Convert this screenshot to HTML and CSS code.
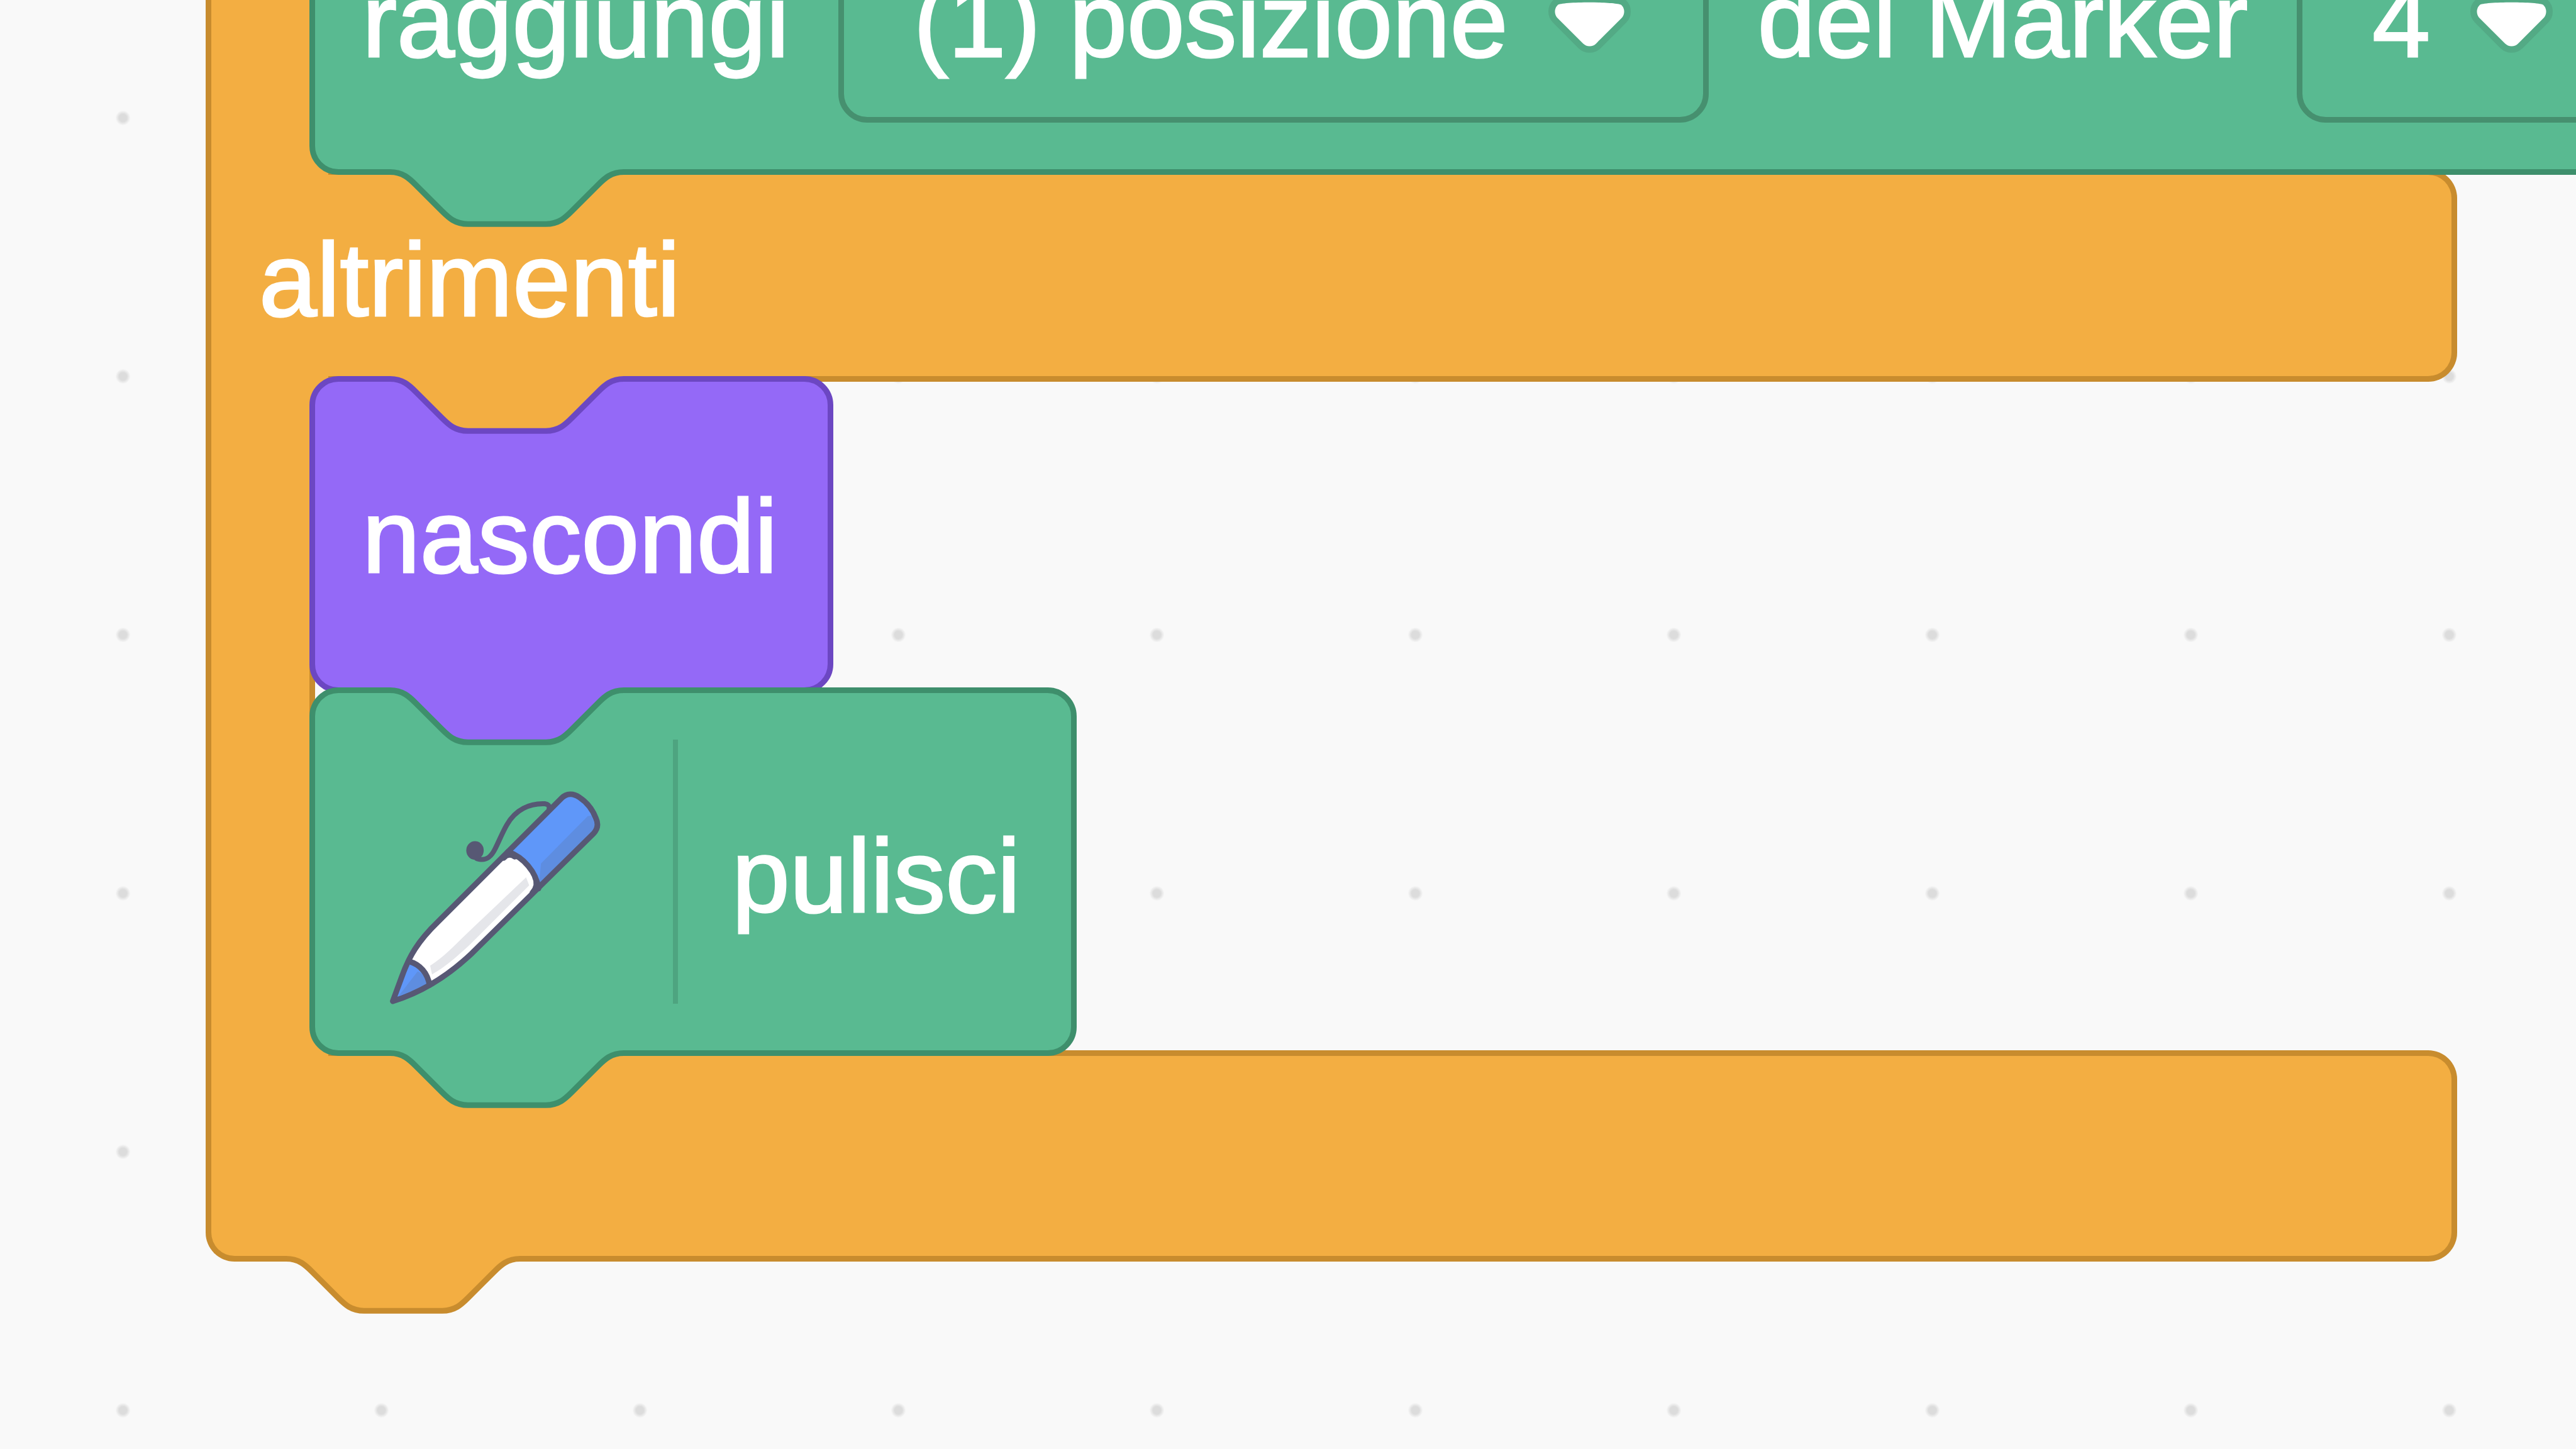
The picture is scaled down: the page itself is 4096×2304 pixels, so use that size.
FILE: index.html
```html
<!DOCTYPE html>
<html lang="it">
<head>
  <meta charset="utf-8">
  <meta name="viewport" content="width=device-width, initial-scale=1">
  <title>Blocchi</title>
  <link rel="stylesheet" href="styles.css">
</head>
<body>
  <svg class="defs" aria-hidden="true">
    <symbol id="connector" viewBox="0 0 36 9">
      <path class="connector-fill" d="M0 .44c2 0 3 1 4 2l4 4c1 1 2 2 4 2h12c2 0 3-1 4-2l4-4c1-1 2-2 4-2V0H0Z"/>
      <path class="connector-line" d="M0 .44c2 0 3 1 4 2l4 4c1 1 2 2 4 2h12c2 0 3-1 4-2l4-4c1-1 2-2 4-2"/>
    </symbol>
    <symbol id="arrow" viewBox="0 0 12.71 8.79">
      <path fill="#231f20" opacity=".1" d="M12.71 2.44A2.41 2.41 0 0 1 12 4.16L8.08 8.08a2.45 2.45 0 0 1-3.45 0L.72 4.16A2.42 2.42 0 0 1 0 2.44 2.48 2.48 0 0 1 .71.71C1 .47 1.43 0 6.36 0S11.75.46 12 .71a2.44 2.44 0 0 1 .71 1.73Z"/>
      <path fill="#fff" d="M6.36 7.79a1.43 1.43 0 0 1-1-.42L1.42 3.45a1.44 1.44 0 0 1 0-2c.56-.56 9.31-.56 9.87 0a1.44 1.44 0 0 1 0 2L7.37 7.37a1.43 1.43 0 0 1-1.01.42Z"/>
    </symbol>
  </svg>

  <main class="workspace">
    <section class="c-block">
      <div class="spine">
        <svg class="connector tab" aria-hidden="true"><use href="#connector"/></svg>
      </div>

      <div class="mouth">
        <div class="block pen">
          <span class="label">raggiungi</span>
          <span class="field">
            <select class="field-input" aria-label="posizione"><option>(1) posizione</option></select>
            <svg class="field-arrow" aria-hidden="true"><use href="#arrow"/></svg>
          </span>
          <span class="label">del Marker</span>
          <span class="field">
            <select class="field-input" aria-label="Marker"><option>4</option></select>
            <svg class="field-arrow" aria-hidden="true"><use href="#arrow"/></svg>
          </span>
          <svg class="connector tab" aria-hidden="true"><use href="#connector"/></svg>
        </div>
      </div>

      <div class="arm arm-else"></div>
      <div class="arm-label"><span class="label">altrimenti</span></div>

      <div class="mouth">
        <div class="block looks">
          <svg class="connector notch in-control" aria-hidden="true"><use href="#connector"/></svg>
          <span class="label">nascondi</span>
          <svg class="connector tab" aria-hidden="true"><use href="#connector"/></svg>
        </div>
        <div class="block pen tall">
          <svg class="connector notch in-looks" aria-hidden="true"><use href="#connector"/></svg>
          <svg class="pen-icon" viewBox="-1 -4 420 420" aria-hidden="true">
            <path fill="#fff" d="M48 414L62 376C74 342 88 318 121 286L319 88C327 80 338 80 348 87C360 95 369 107 374 120C379 131 376 139 370 145L174 338C140 370 100 398 48 414Z"/>
            <path fill="#5f97f9" d="M233 174L319 88C327 80 338 80 348 87C360 95 369 107 374 120C379 131 376 139 370 145L282 233C278 208 258 183 233 174Z"/>
            <path fill="#5e8de0" d="M361 117L286 193L282 233L370 145C375 138 372 126 366 116Z"/>
            <path fill="#5f97f9" d="M48 414L74 350C92 355 104 369 107 388Z"/>
            <path fill="#5e8de0" d="M58 405L88 366C97 370 104 379 107 388Z"/>
            <path fill="#e5e6ea" d="M262 215L160 312C140 332 125 346 108 357L111 371C135 357 150 343 170 325L267 228Z"/>
            <g fill="none" stroke="#575874" stroke-width="9" stroke-linecap="round" stroke-linejoin="round">
              <path stroke-width="8" d="M183 185C198 190 206 182 212 170C219 156 224 143 231 131C245 106 268 96 292 97Q300 98 299 104"/>
              <path d="M74 350C92 355 104 369 107 388"/>
              <path d="M233 174C258 183 278 206 282 233M272 240Q283 228 276 214M226 184Q234 175 244 182"/>
              <path d="M48 414L62 376C74 342 88 318 121 286L319 88C327 80 338 80 348 87C360 95 369 107 374 120C379 131 376 139 370 145L174 338C140 370 100 398 48 414Z"/>
            </g>
            <ellipse cx="180" cy="172" rx="14" ry="15" fill="#575874"/>
          </svg>
          <span class="separator"></span>
          <span class="label">pulisci</span>
          <svg class="connector tab" aria-hidden="true"><use href="#connector"/></svg>
        </div>
      </div>

      <div class="arm arm-end"></div>
    </section>
  </main>
</body>
</html>
```
FILE: styles.css
```css
:root {
  --control: #f3ae42;
  --control-line: #c88c2e;
  --pen: #59ba91;
  --pen-line: #3e8f6c;
  --looks: #9469f7;
  --looks-line: #6c47c2;
  --line: 9px;
  --radius: 46px;
}

* {
  box-sizing: border-box;
}

body {
  margin: 0;
  font-family: "Liberation Sans", Arial, sans-serif;
  font-size: 165px;
  line-height: 192px;
  color: #fff;
  -webkit-text-stroke: 3px #fff;
}

.defs {
  position: absolute;
  width: 0;
  height: 0;
}

/* Canvas with its dot grid */
.workspace {
  position: relative;
  min-height: 100vh;
  overflow: hidden;
  background: #f9f9f9 radial-gradient(circle, #dcdcdc 0 6px, transparent 12px) -10px -18px / 411px 411px;
}

/* "If / else" block that wraps two stacks */
.c-block {
  --fill: var(--control);
  --stroke: var(--control-line);
  position: absolute;
  top: -217px;
  left: 327px;
  right: 189px;
  display: grid;
  grid-template-columns: 165px minmax(0, 1fr);
}

.spine {
  position: relative;
  grid-column: 1;
  grid-row: 1 / 5;
  background: var(--fill);
  border: solid var(--stroke);
  border-width: 0 0 var(--line) var(--line);
  border-bottom-left-radius: var(--radius);
}

.arm {
  grid-column: 2;
  background: var(--fill);
  border: var(--line) solid var(--stroke);
  border-left: 0;
  border-radius: 0 var(--radius) var(--radius) 0;
}

.arm-else {
  grid-row: 2;
  height: 338px;
}

.arm-end {
  grid-row: 4;
  height: 336px;
}

.arm-label {
  position: relative;
  grid-column: 1 / 3;
  grid-row: 2;
  display: flex;
  align-items: center;
  padding-left: 85px;
}

.mouth {
  position: relative;
  z-index: 1;
  grid-column: 2;
  display: flex;
  flex-direction: column;
  align-items: flex-start;
  margin: calc(-1 * var(--line)) 0;
  background:
    linear-gradient(var(--control), var(--control)) left top / 30px 46px no-repeat,
    linear-gradient(var(--control), var(--control)) left bottom / 30px 46px no-repeat,
    linear-gradient(var(--control-line), var(--control-line)) left top / 9px 100% no-repeat;
}

/* Stack blocks */
.block {
  position: relative;
  display: flex;
  align-items: center;
  gap: 78px;
  width: max-content;
  height: 504px;
  padding: 0 80px 0 75px;
  background: var(--fill);
  border: var(--line) solid var(--stroke);
  border-radius: var(--radius);
}

.block + .block {
  margin-top: calc(-1 * var(--line));
}

.pen {
  --fill: var(--pen);
  --stroke: var(--pen-line);
}

.looks {
  --fill: var(--looks);
  --stroke: var(--looks-line);
}

.tall {
  height: 586px;
}

.label {
  padding-top: 14px;
  white-space: nowrap;
}

.looks .label {
  padding-top: 6px;
}

/* Puzzle connectors */
.connector {
  position: absolute;
  left: 119px;
  width: 372px;
  height: 93px;
  fill: var(--fill);
}

.connector-line {
  fill: none;
  stroke: var(--stroke);
  stroke-width: .88;
}

.tab {
  top: 100%;
}

.notch {
  top: calc(-1 * var(--line));
}

.in-control {
  fill: var(--control);
}

.in-looks {
  fill: var(--looks);
}

/* Drop-down fields */
.field {
  display: grid;
  align-items: center;
}

.field-input {
  grid-area: 1 / 1;
  height: 338px;
  margin: 0;
  padding: 14px 310px 0 111px;
  appearance: none;
  font: inherit;
  color: inherit;
  background: transparent;
  border: var(--line) solid #46906f;
  border-radius: var(--radius);
}

.field-arrow {
  grid-area: 1 / 1;
  justify-self: end;
  width: 131px;
  height: 91px;
  margin: 24px 124px 0 0;
  pointer-events: none;
}

/* Extension icon and its divider */
.pen-icon {
  width: 416px;
  height: 420px;
  overflow: visible;
}

.separator {
  width: 8px;
  height: 420px;
  margin-right: 8px;
  background: #4ea480;
}
```
